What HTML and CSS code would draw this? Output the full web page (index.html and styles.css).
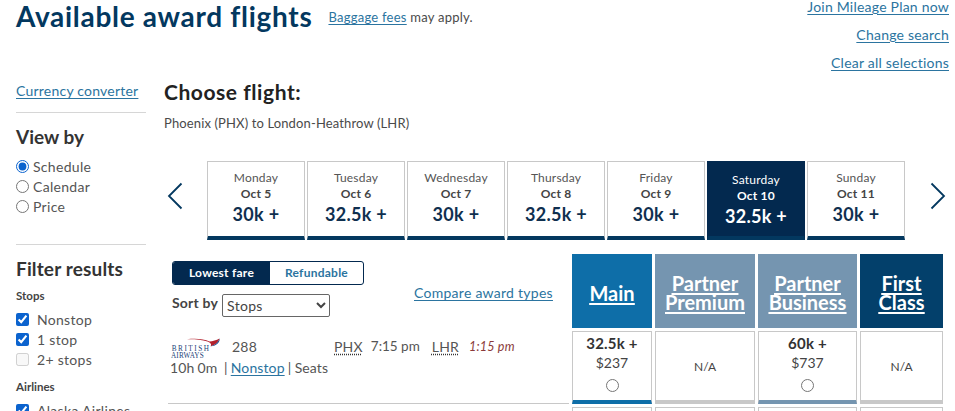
FILE: index.html
```html
<!DOCTYPE html>
<html lang="en">
<head>
<meta charset="utf-8">
<title>Available award flights</title>
<link rel="stylesheet" href="styles.css">
</head>
<body>
<div class="page">
  <header class="top">
    <h1>Available award flights</h1>
    <p class="bag"><a href="#">Baggage fees</a> may apply.</p>
    <nav class="toplinks">
      <a href="#">Join Mileage Plan now</a>
      <a href="#">Change search</a>
      <a href="#">Clear all selections</a>
    </nav>
  </header>
  <div class="layout">
    <aside class="side">
      <a class="cur" href="#">Currency converter</a>
      <hr class="rule r1">
      <h2 class="viewby">View by</h2>
      <label class="opt"><input type="radio" name="v" checked><span>Schedule</span></label>
      <label class="opt"><input type="radio" name="v"><span>Calendar</span></label>
      <label class="opt"><input type="radio" name="v"><span>Price</span></label>
      <hr class="rule r2">
      <h2 class="filter">Filter results</h2>
      <h3 class="stops">Stops</h3>
      <label class="opt chk"><input type="checkbox" checked><span>Nonstop</span></label>
      <label class="opt chk"><input type="checkbox" checked><span>1 stop</span></label>
      <label class="opt chk"><input type="checkbox" disabled><span>2+ stops</span></label>
      <h3 class="airlines">Airlines</h3>
      <label class="opt chk"><input type="checkbox" checked><span>Alaska Airlines</span></label>
    </aside>
    <main class="main">
      <h2 class="choose">Choose flight:</h2>
      <p class="route">Phoenix (PHX) to London-Heathrow (LHR)</p>
      <div class="dates">
        <svg class="arrow" viewBox="0 0 16 28" width="16" height="28"><path d="M14.5 1.5 2 14l12.5 12.5" fill="none" stroke="#03385f" stroke-width="1.8"/></svg>
        <div class="days">
          <div class="day"><span class="dn">Monday</span><b class="dd">Oct 5</b><b class="dp">30k +</b></div>
          <div class="day"><span class="dn">Tuesday</span><b class="dd">Oct 6</b><b class="dp">32.5k +</b></div>
          <div class="day"><span class="dn">Wednesday</span><b class="dd">Oct 7</b><b class="dp">30k +</b></div>
          <div class="day"><span class="dn">Thursday</span><b class="dd">Oct 8</b><b class="dp">32.5k +</b></div>
          <div class="day"><span class="dn">Friday</span><b class="dd">Oct 9</b><b class="dp">30k +</b></div>
          <div class="day sel"><span class="dn">Saturday</span><b class="dd">Oct 10</b><b class="dp">32.5k +</b></div>
          <div class="day"><span class="dn">Sunday</span><b class="dd">Oct 11</b><b class="dp">30k +</b></div>
        </div>
        <svg class="arrow" viewBox="0 0 16 28" width="16" height="28"><path d="M1.5 1.5 14 14 1.5 26.5" fill="none" stroke="#03385f" stroke-width="1.8"/></svg>
      </div>
      <div class="fares">
        <div class="controls">
          <div class="left-ctl">
            <div class="toggle"><span class="on">Lowest fare</span><span class="off">Refundable</span></div>
            <div class="sort"><b>Sort by</b><select><option>Stops</option></select></div>
          </div>
          <a class="compare" href="#">Compare award types</a>
        </div>
        <div class="heads">
          <a class="head h-main" href="#"><span>Main</span></a>
          <a class="head h-pp" href="#"><span>Partner<br>Premium</span></a>
          <a class="head h-pb" href="#"><span>Partner<br>Business</span></a>
          <a class="head h-first" href="#"><span>First<br>Class</span></a>
        </div>
      </div>
      <div class="row">
        <div class="flight">
          <div class="f1">
            <div class="logo">
              <svg viewBox="0 0 50 14" width="50" height="14"><path d="M16 1.3C25 .3 33 1 38.500 3.600 41.500 3.400 45.500 2.400 48.500 .6 48 3.600 44 7.400 39.500 8.300 41 6.500 39.500 4.800 36.500 3.600 30.500 1.600 23 1.100 16 1.300Z" fill="#b3202c"/><path d="M39.500 8.300C44 7.400 48 3.600 48.500 .6 49.500 3.600 45.500 8.500 39.500 8.300Z" fill="#1c4a8c"/></svg>
              <span class="ba"><span class="ba1">BRITISH</span><span class="ba2">AIRWAYS</span></span>
            </div>
            <span class="num">288</span>
            <abbr class="ap a1">PHX</abbr><span class="t1">7:15 pm</span>
            <abbr class="ap a2">LHR</abbr><i class="t2">1:15 pm</i>
          </div>
          <div class="f2">10h 0m&nbsp; | <a href="#">Nonstop</a> | Seats</div>
        </div>
        <div class="cell c-main"><b>32.5k +</b><span>$237</span><input type="radio" name="f"></div>
        <div class="cell na c-pp"><span>N/A</span></div>
        <div class="cell c-pb"><b>60k +</b><span>$737</span><input type="radio" name="f"></div>
        <div class="cell na c-first"><span>N/A</span></div>
      </div>
      <div class="row2">
        <div class="spacer"></div>
        <div class="stub s1"></div><div class="stub s2"></div><div class="stub s3"></div><div class="stub s4"></div>
      </div>
    </main>
  </div>
</div>
</body>
</html>
```
FILE: styles.css
```css
* { box-sizing: border-box; }
html, body { margin: 0; padding: 0; background: #fff; }
body { font-family: "Lato", "Noto Sans", sans-serif; color: #4a4a4a; }
.page { width: 955px; height: 411px; overflow: hidden; padding-left: 16px; }
a { color: #2b74a0; text-decoration: underline; text-underline-offset: 2px; }
.top { display: flex; align-items: flex-start; height: 78px; padding-right: 6px; }
h1 { margin: -2px 0 0; font-size: 28px; line-height: 36px; font-weight: 700; color: #03385f; letter-spacing: .7px; }
.bag { margin: 9px 0 0 16px; font-size: 13px; line-height: 17px; letter-spacing: .25px; }
.toplinks { margin-left: auto; display: flex; flex-direction: column; align-items: flex-end; font-size: 14px; line-height: 28px; margin-top: -7px; letter-spacing: .22px; }
.layout { display: flex; }
.side { width: 130px; flex: none; margin-right: 18px; }
.cur { display: block; font-size: 14px; line-height: 18px; margin-top: 4px; letter-spacing: .22px; white-space: nowrap; }
.rule { border: 0; border-top: 1px solid #d6d6d6; margin: 0; }
.r1 { margin-top: 12px; }
.viewby { margin: 12px 0 7px; font-size: 19px; line-height: 24px; font-weight: 700; color: #333; }
.opt { display: flex; align-items: center; height: 20px; font-size: 14px; letter-spacing: .3px; color: #555; }
.opt input { margin: 0 4px 0 0; width: 13px; height: 13px; flex: none; accent-color: #0b63ce; }
.chk input { margin-right: 8px; }
.r2 { margin-top: 28px; }
.filter { margin: 12px 0 7px; font-size: 19px; line-height: 24px; font-weight: 700; color: #333; letter-spacing: .15px; }
.stops, .airlines { margin: 0 0 5px; font-size: 11.5px; line-height: 16px; font-weight: 700; color: #444; }
.airlines { margin: 10px 0 5px; }
.main { width: 780px; flex: none; }
.choose { margin: 0; font-size: 21px; line-height: 28px; font-weight: 700; color: #222; letter-spacing: .55px; }
.route { margin: 9px 0 0; font-size: 13px; line-height: 16px; letter-spacing: .13px; }
.dates { display: flex; align-items: flex-start; margin-top: 30px; }
.arrow { flex: none; margin-top: 21px; margin-left: 3px; }
.arrow:last-child { margin-left: 25px; }
.days { display: flex; gap: 2px; margin-left: 24px; }
.day { width: 98px; height: 79px; border: 1px solid #c8c8c8; border-bottom: 4px solid #03385f; display: flex; flex-direction: column; align-items: center; padding-top: 8px; background: #fff; }
.dn { font-size: 12px; line-height: 16px; letter-spacing: .2px; color: #555; }
.dd { font-size: 12px; line-height: 16px; font-weight: 700; color: #444; letter-spacing: .2px; }
.dp { font-size: 18px; line-height: 24px; font-weight: 700; color: #0f2f4f; letter-spacing: .3px; }
.sel { background: #03294f; border-color: #03294f; border-bottom-color: #03385f; padding-top: 10px; }
.sel .dn, .sel .dd, .sel .dp { color: #fff; }
.fares { display: flex; margin-top: 14px; padding-left: 8px; }
.controls { width: 400px; display: flex; flex: none; padding-top: 7px; }
.left-ctl { width: 242px; flex: none; }
.toggle { display: flex; width: 192px; height: 24px; border: 1px solid #03294f; border-radius: 3px; overflow: hidden; font-size: 12px; font-weight: 700; line-height: 22px; text-align: center; letter-spacing: .25px; }
.on { width: 97px; background: #03294f; color: #fff; }
.off { flex: 1; color: #2b74a0; }
.sort { display: flex; align-items: flex-start; margin-top: 10px; font-size: 14px; letter-spacing: .2px; }
.sort b { color: #444; line-height: 15px; }
.sort select { width: 108px; height: 23px; margin: -1px 0 0 4px; font: 14px "Lato", sans-serif; letter-spacing: .3px; color: #444; background: #fff; border: 1px solid #666; border-radius: 2px; }
.compare { font-size: 14px; line-height: 18px; margin-top: 23px; white-space: nowrap; letter-spacing: .27px; }
.heads { display: flex; gap: 3px; }
.head { height: 74px; padding-top: 4px; display: flex; align-items: center; justify-content: center; text-align: center; color: #fff; font-size: 20px; line-height: 19px; font-weight: 700; }
.head span { text-decoration: underline; text-underline-offset: 2px; }
.h-main, .c-main, .s1 { width: 80px; }
.h-pp, .c-pp, .s2 { width: 100px; }
.h-pb, .c-pb, .s3 { width: 99px; }
.h-first, .c-first, .s4 { width: 83px; }
.h-main { background: #0e6ea8; }
.h-pp, .h-pb { background: #7595b0; }
.h-first { background: #03406b; }
.row { display: flex; gap: 3px; margin-top: 3px; padding-left: 4px; }
.flight { width: 401px; height: 73px; flex: none; border-bottom: 1px solid #c8c8c8; margin-right: -3px; padding-top: 7px; }
.f1 { display: flex; align-items: flex-start; height: 21px; font-size: 14px; line-height: 17px; color: #555; letter-spacing: .2px; padding-left: 3px; }
.logo { width: 50px; height: 21px; flex: none; position: relative; }
.logo svg { display: block; }
.ba { position: absolute; left: 0; top: 7px; width: 40px; font: 9px/6.5px "Liberation Serif", serif; color: #1c3f78; transform: scaleX(.8); transform-origin: left top; }
.ba1, .ba2 { display: block; white-space: nowrap; }
.ba1 { letter-spacing: 1.9px; margin-left: 1px; }
.num { margin-left: 11px; width: 102px; flex: none; }
.ap { text-decoration: underline dotted #333; text-underline-offset: 2px; }
.t1 { margin-left: 8px; width: 61px; flex: none; font-size: 13.5px; letter-spacing: 0; }
.t2 { margin-left: 10px; font-size: 12.5px; color: #8a3a3a; }
.f2 { font-size: 14px; line-height: 18px; color: #555; padding-left: 2px; letter-spacing: .12px; word-spacing: -.5px; }
.cell { height: 73px; flex: none; display: flex; flex-direction: column; align-items: center; border: 1px solid #c8c8c8; border-bottom-width: 4px; font-size: 14px; line-height: 19px; color: #444; padding-top: 2px; }
.cell b { font-size: 15px; color: #333; letter-spacing: .2px; }
.cell input { margin: 7px 0 0; width: 13px; height: 13px; }
.c-main { border-bottom-color: #0e6ea8; margin-left: 3px; }
.c-pb { border-bottom-color: #7595b0; }
.na { justify-content: center; font-size: 12px; padding-top: 0; }
.row2 { display: flex; gap: 3px; margin-top: 3px; padding-left: 4px; }
.spacer { width: 401px; flex: none; margin-right: -3px; }
.stub { height: 20px; border: 1px solid #c8c8c8; margin: 0; flex: none; }
.s1 { margin-left: 3px; }
```
